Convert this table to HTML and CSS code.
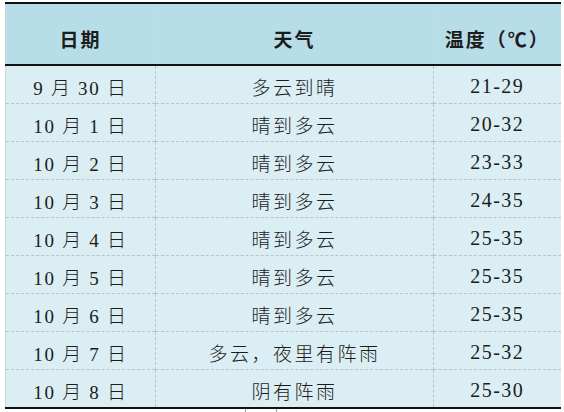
FILE: index.html
```html
<!DOCTYPE html>
<html>
<head>
<meta charset="utf-8">
<title>天气预报</title>
<link rel="stylesheet" href="styles.css">
</head>
<body>
<div class="sheet">
  <table class="weather">
    <colgroup>
      <col class="c-date">
      <col class="c-wx">
      <col class="c-temp">
    </colgroup>
    <thead>
      <tr><th>日期</th><th>天气</th><th>温度（℃）</th></tr>
    </thead>
    <tbody>
      <tr><td class="d">9 月 30 日</td><td>多云到晴</td><td class="t">21-29</td></tr>
      <tr><td class="d">10 月 1 日</td><td>晴到多云</td><td class="t">20-32</td></tr>
      <tr><td class="d">10 月 2 日</td><td>晴到多云</td><td class="t">23-33</td></tr>
      <tr><td class="d">10 月 3 日</td><td>晴到多云</td><td class="t">24-35</td></tr>
      <tr><td class="d">10 月 4 日</td><td>晴到多云</td><td class="t">25-35</td></tr>
      <tr><td class="d">10 月 5 日</td><td>晴到多云</td><td class="t">25-35</td></tr>
      <tr><td class="d">10 月 6 日</td><td>晴到多云</td><td class="t">25-35</td></tr>
      <tr><td class="d">10 月 7 日</td><td>多云，夜里有阵雨</td><td class="t">25-32</td></tr>
      <tr><td class="d">10 月 8 日</td><td>阴有阵雨</td><td class="t">25-30</td></tr>
    </tbody>
  </table>
  <div class="below">
    <span class="tick"></span><span class="tick"></span>
  </div>
</div>
</body>
</html>
```

FILE: styles.css
```css
html, body {
  margin: 0;
  padding: 0;
  background: #ffffff;
}

.sheet {
  padding: 2px 4px 0 5px;
}

.weather {
  width: 555px;
  border-collapse: collapse;
  table-layout: fixed;
  border-left: 1px solid #c9d6da;
  color: #1c1c1c;
}

.c-date { width: 150px; }
.c-wx { width: 278px; }
.c-temp { width: 127px; }

.weather th {
  height: 52px;
  padding: 8px 0 0 0;
  background: #b7dee8;
  border-top: 2px solid #111;
  border-bottom: 2px solid #111;
  border-left: 1px dotted #c6dbe0;
  font-family: "Liberation Serif", "Noto Sans CJK SC", serif;
  font-size: 19px;
  font-weight: 700;
  letter-spacing: 2px;
  text-align: center;
  vertical-align: middle;
}

.weather td {
  height: 34px;
  padding: 3px 0 0 0;
  background: #daeef3;
  border-top: 1px dashed #b9c4c7;
  border-left: 1px dashed #b9c4c7;
  font-family: "Liberation Serif", "Noto Sans CJK SC", serif;
  font-size: 19px;
  font-weight: 300;
  letter-spacing: 2.5px;
  text-align: center;
  vertical-align: middle;
}

.weather td.d {
  letter-spacing: 1.7px;
}

.weather td.t {
  font-size: 20px;
  letter-spacing: 1.5px;
}

.weather th:first-child,
.weather td:first-child {
  border-left: none;
}

.weather tbody tr:first-child td {
  border-top: none;
}

.weather tbody tr:last-child td {
  border-bottom: 2px solid #111;
}

.below {
  display: flex;
  gap: 30px;
  padding-left: 240px;
}

.tick {
  display: block;
  width: 1px;
  height: 5px;
  background: #9a9a9a;
}
```
